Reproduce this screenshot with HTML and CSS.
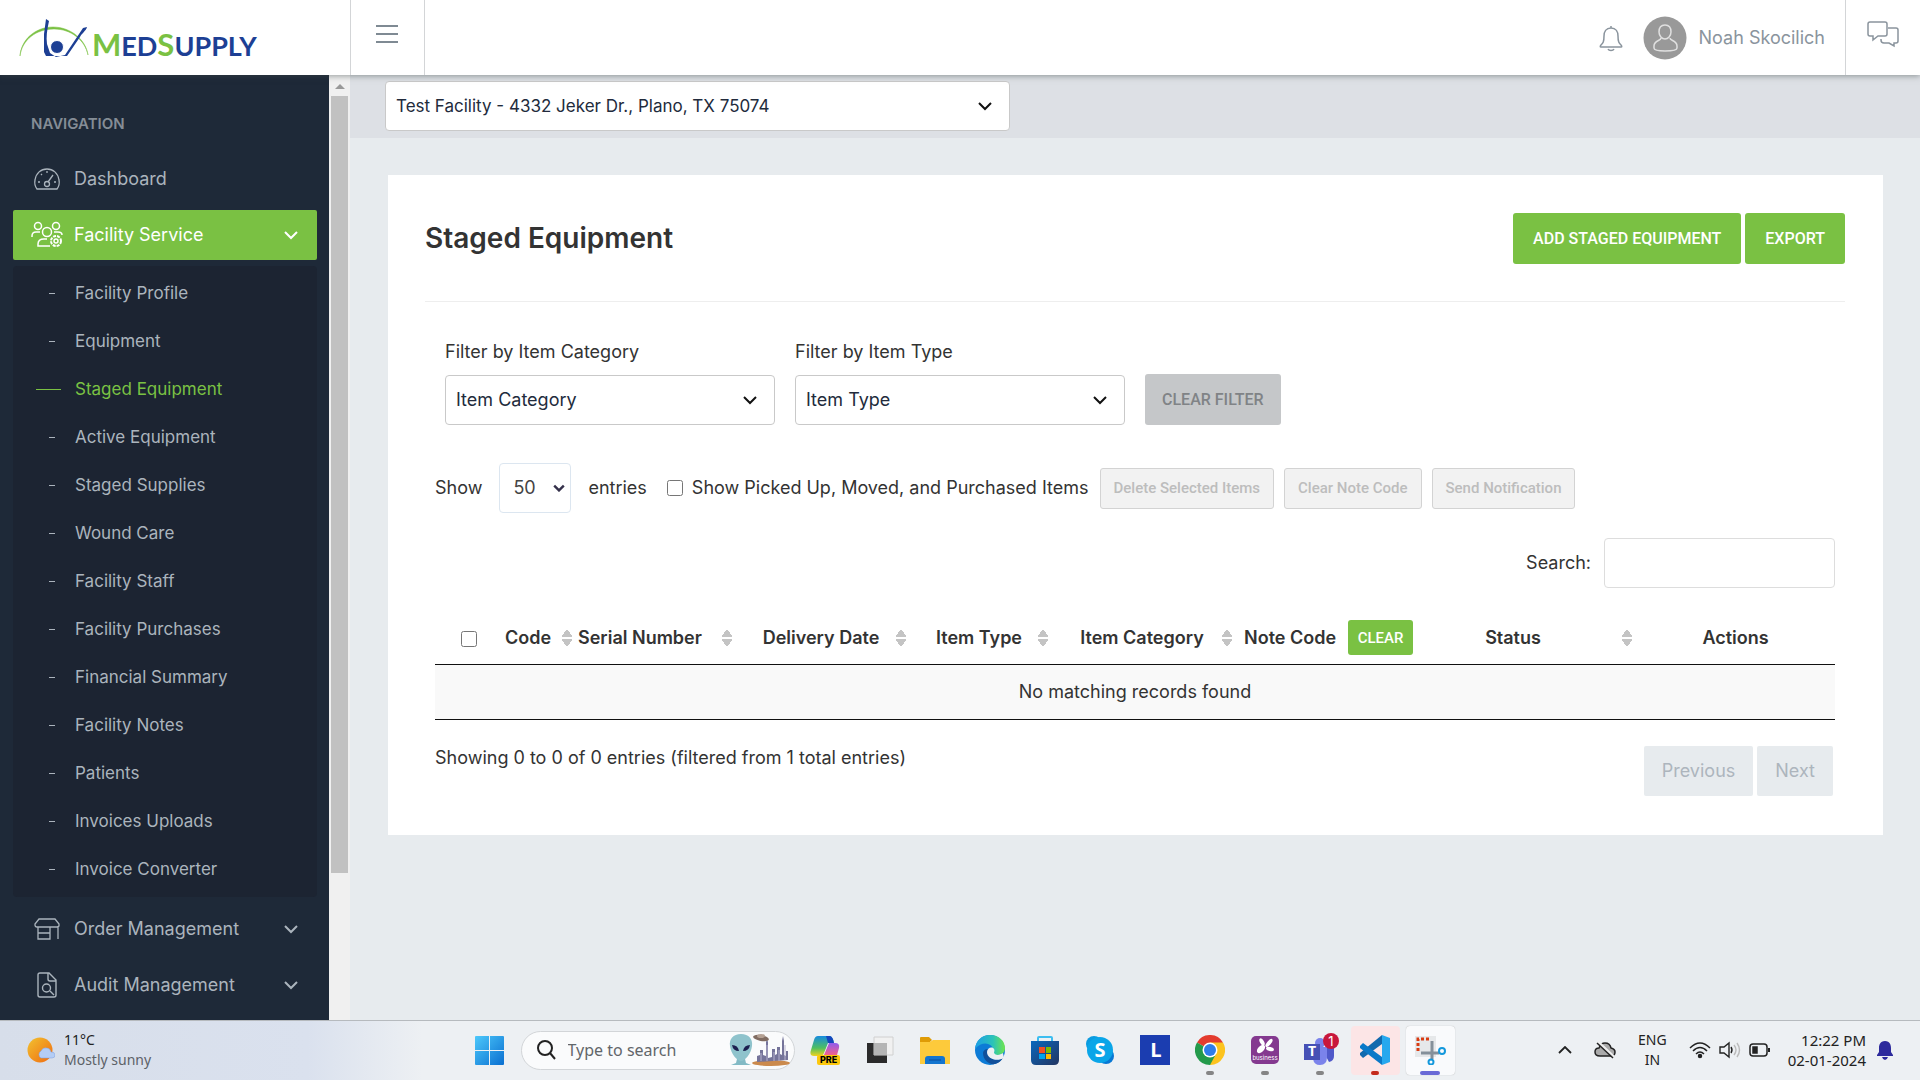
FILE: index.html
```html
<!DOCTYPE html>
<html lang="en">
<head>
<meta charset="utf-8">
<meta name="viewport" content="width=device-width, initial-scale=1">
<title>Staged Equipment - MedSupply</title>
<link rel="stylesheet" href="styles.css">
</head>
<body>
<header class="topbar">
  <a class="brand" href="#" aria-label="MedSupply">
    <svg width="250" height="50" viewBox="0 0 250 50">
      <path d="M1 42C2 26 16 13 34 13c18 0 33 13 35 28C66 26 52 15 35 15 17 15 3 26 1 42z" fill="#7ac143" stroke="#7ac143" stroke-width=".5"/>
      <path d="M27 5l3 2c-2 9-3 16-2 23l3 9 6 4 9-2 18-27 4-1c-1 4-5 6-7 10L48 42H27l-2-4V20z" fill="#1d3f94"/>
      <circle cx="38" cy="33" r="6.500" fill="#1d3f94" stroke="#fff"/>
      <text class="brand-text" x="73" y="42" fill="#1d3f94"><tspan class="brand-cap">M</tspan>ED<tspan class="brand-cap">S</tspan>UPPLY</text>
    </svg>
  </a>
  <button class="menu-toggle" aria-label="Toggle menu"><svg width="24" height="20" viewBox="0 0 24 20" stroke="#7f8a93" stroke-width="2"><path d="M1 2h22M1 10h22M1 18h22"/></svg></button>
  <div class="user">
    <button class="plain" aria-label="Alerts"><svg width="24" height="28" viewBox="0 0 24 28" fill="none" stroke="#8a949d" stroke-width="1.5"><path d="M12 2v2M12 4c-5 0-7 4-7 8 0 6-1 7-3 9-1 1-1 2 0 2h20c1 0 1-1 0-2-2-2-3-3-3-9 0-4-2-8-7-8zM9 25c1 2 5 2 6 0"/></svg></button>
    <a class="profile" href="#">
      <svg width="44" height="44" viewBox="0 0 44 44"><circle cx="22" cy="22" r="21.500" fill="#999"/><path d="M22 9c4 0 6 3 6 7s-3 7-6 7-6-3-6-7 2-7 6-7zM18 22c0 3-7 2-7 8v2c0 2 5 3 11 3s12-1 12-3v-2c0-6-7-5-7-8" fill="none" stroke="#e0e0e0" stroke-width="1.500"/></svg>
      <span>Noah Skocilich</span>
    </a>
  </div>
  <button class="chat" aria-label="Messages"><svg width="34" height="28" viewBox="0 0 34 28" fill="none" stroke="#8a949d" stroke-width="1.500"><path d="M4 2h15q2 0 2 2v10q0 2-2 2h-7l-5 4v-4H4q-2 0-2-2V4q0-2 2-2zM22 8h8q2 0 2 2v11q0 2-2 2h-2v3l-5-3h-5q-3 0-3-3v-1"/></svg></button>
</header>

<div class="app">
  <nav class="sidebar">
    <h2 class="nav-title">NAVIGATION</h2>
    <a class="nav-item" href="#">
      <svg width="28" height="28" viewBox="0 0 28 28" fill="none" stroke="currentColor" stroke-width="1.300"><path d="M4 24q-3-4-2-9C3 8 8 4 14 4s11 4 12 11q1 5-2 9zM14 6v2M8 9l1 1M5 17h2M21 17h2M20 10l-5 7"/><circle cx="14" cy="19" r="2.500"/></svg>
      <span>Dashboard</span>
    </a>
    <a class="nav-item current" href="#">
      <svg class="wide" width="32" height="28" viewBox="0 0 32 28" fill="none" stroke="currentColor" stroke-width="1.500"><circle cx="7" cy="5" r="3.500"/><circle cx="25" cy="5" r="3.500"/><circle cx="16" cy="11" r="4.500"/><path d="M1 16v-1q0-4 4-4h4M31 14q0-3-4-3h-4M19 25H7v-2q0-5 6-5h3"/><circle cx="25" cy="20" r="5" stroke-dasharray="3 1" stroke-width="2"/><circle cx="25" cy="20" r="2"/></svg>
      <span>Facility Service</span>
      <svg class="chev" width="14" height="10" viewBox="0 0 14 10"><path d="M1 2l6 6 6-6"/></svg>
    </a>
    <ul class="subnav">
      <li><a href="#">Facility Profile</a></li>
      <li><a href="#">Equipment</a></li>
      <li><a class="active" href="#">Staged Equipment</a></li>
      <li><a href="#">Active Equipment</a></li>
      <li><a href="#">Staged Supplies</a></li>
      <li><a href="#">Wound Care</a></li>
      <li><a href="#">Facility Staff</a></li>
      <li><a href="#">Facility Purchases</a></li>
      <li><a href="#">Financial Summary</a></li>
      <li><a href="#">Facility Notes</a></li>
      <li><a href="#">Patients</a></li>
      <li><a href="#">Invoices Uploads</a></li>
      <li><a href="#">Invoice Converter</a></li>
    </ul>
    <a class="nav-item" href="#">
      <svg width="28" height="28" viewBox="0 0 28 28" fill="none" stroke="currentColor" stroke-width="1.300"><path d="M6 4h16l4 5v2q-1 1-2 1H4q-2 0-2-2V9zM5 12v12h12V12M5 18h12M25 12v12"/></svg>
      <span>Order Management</span>
      <svg class="chev" width="14" height="10" viewBox="0 0 14 10"><path d="M1 2l6 6 6-6"/></svg>
    </a>
    <a class="nav-item" href="#">
      <svg width="28" height="28" viewBox="0 0 28 28" fill="none" stroke="currentColor" stroke-width="1.400"><path d="M7 2h9l7 7v15q0 2-2 2H7q-2 0-2-2V4q0-2 2-2zM15 2v6q0 2 2 2h6M17 20l4 4"/><circle cx="13.500" cy="17" r="4"/></svg>
      <span>Audit Management</span>
      <svg class="chev" width="14" height="10" viewBox="0 0 14 10"><path d="M1 2l6 6 6-6"/></svg>
    </a>
  </nav>
  <div class="scrollbar" aria-hidden="true"><i class="scroll-up"></i><i class="scroll-thumb"></i></div>

  <main class="main">
    <div class="facility-bar">
      <div class="select facility">
        <select aria-label="Facility"><option>Test Facility - 4332 Jeker Dr., Plano, TX 75074</option></select>
        <svg width="14" height="10" viewBox="0 0 14 10"><path d="M1 2l6 6 6-6"/></svg>
      </div>
    </div>
    <section class="card">
      <div class="card-head">
        <h1>Staged Equipment</h1>
        <div class="actions">
          <button class="btn green">ADD STAGED EQUIPMENT</button>
          <button class="btn green">EXPORT</button>
        </div>
      </div>
      <div class="filters">
        <div class="field">
          <label for="category">Filter by Item Category</label>
          <div class="select"><select id="category"><option>Item Category</option></select><svg width="14" height="10" viewBox="0 0 14 10"><path d="M1 2l6 6 6-6"/></svg></div>
        </div>
        <div class="field">
          <label for="type">Filter by Item Type</label>
          <div class="select"><select id="type"><option>Item Type</option></select><svg width="14" height="10" viewBox="0 0 14 10"><path d="M1 2l6 6 6-6"/></svg></div>
        </div>
        <button class="btn gray">CLEAR FILTER</button>
      </div>
      <div class="panel">
        <div class="tools">
          <label for="length">Show</label>
          <div class="select length"><select id="length"><option>50</option></select><svg width="12" height="8" viewBox="0 0 14 10"><path d="M1 2l6 6 6-6"/></svg></div>
          <label class="after" for="length">entries</label>
          <input type="checkbox" id="moved">
          <label class="moved" for="moved">Show Picked Up, Moved, and Purchased Items</label>
          <div class="bulk">
            <button disabled>Delete Selected Items</button>
            <button disabled>Clear Note Code</button>
            <button disabled>Send Notification</button>
          </div>
        </div>
        <div class="search"><label for="search">Search:</label><input id="search" type="search"></div>
        <table>
          <colgroup><col class="c-check"><col class="c-code"><col class="c-serial"><col class="c-date"><col class="c-type"><col class="c-cat"><col class="c-note"><col class="c-status"><col></colgroup>
          <thead>
            <tr>
              <th><input type="checkbox" aria-label="Select all"></th>
              <th class="sort start">Code</th>
              <th class="sort start">Serial Number</th>
              <th class="sort">Delivery Date</th>
              <th class="sort">Item Type</th>
              <th class="sort">Item Category</th>
              <th><div class="note">Note Code <button class="clear">CLEAR</button></div></th>
              <th class="sort">Status</th>
              <th>Actions</th>
            </tr>
          </thead>
          <tbody><tr><td colspan="9">No matching records found</td></tr></tbody>
        </table>
        <div class="table-foot">
          <p>Showing 0 to 0 of 0 entries (filtered from 1 total entries)</p>
          <div class="pager"><button disabled>Previous</button><button disabled>Next</button></div>
        </div>
      </div>
    </section>
  </main>
</div>

<footer class="taskbar">
  <div class="weather">
    <svg width="28" height="28" viewBox="0 0 28 28"><defs><linearGradient id="sun" x1="0" y1="0" x2="1" y2="1"><stop offset="0" stop-color="#f2c230"/><stop offset="1" stop-color="#f06a10"/></linearGradient></defs><circle cx="13" cy="14" r="12.500" fill="url(#sun)"/><path d="M14 22a4 4 0 0 1 0-7q2-4 6-3 3 0 4 4 4 0 4 3t-3 3z" fill="#b4cdf5" stroke="#7e9fe0" stroke-width=".5"/></svg>
    <p>11°C<br><span>Mostly sunny</span></p>
  </div>
  <div class="dock">
    <button aria-label="Start"><svg width="30" height="30" viewBox="0 0 30 30"><defs><linearGradient id="win" x1="0" y1="0" x2="1" y2="1"><stop offset="0" stop-color="#4cc8fb"/><stop offset="1" stop-color="#0a6fd0"/></linearGradient></defs><path d="M0 2q0-1 1-1h13v14H0zM15 1h13q1 0 1 1v13H15zM0 16h14v14H1q-1 0-1-1zM15 16h14v13q0 1-1 1H15z" fill="url(#win)"/></svg></button>
    <label class="os-search">
      <svg width="20" height="20" viewBox="0 0 20 20" fill="none" stroke="#222" stroke-width="2"><circle cx="9" cy="8" r="7"/><path d="M14 13l5 6"/></svg>
      <input type="text" placeholder="Type to search" aria-label="Type to search">
      <svg width="62" height="34" viewBox="0 0 62 34"><ellipse cx="42" cy="30" rx="19" ry="3" fill="#cb8a4d"/><path d="M28 29v-6l3-1v-5h3v5l3 1V9l1-3 1 3v16l4-1v-8h3v6l2-1v-7h3v7l2 1V8l1-5 1 5v14l2 1v-5h2v9z" fill="#75749a"/><path d="M32 28v-8M38 28V12M45 28v-9M50 28V17M56 27v-15" stroke="#b7b3cf"/><path d="M8 26h8l1 4 5 2H2l5-2z" fill="#82bac5"/><path d="M12 1c8 0 12 5 11 12-1 8-7 15-11 15S2 21 1 13C0 6 4 1 12 1z" fill="#8fc3cc"/><path d="M3 12q6 0 7 6-6 0-7-6zM21 12q-6 0-7 6 6 0 7-6z" fill="#1c2050"/><ellipse cx="32" cy="5" rx="8" ry="3" transform="rotate(10 32 5)" fill="#806c62"/><ellipse cx="32" cy="3" rx="4" ry="2" fill="#b4a194"/></svg>
    </label>
    <button aria-label="Copilot"><svg width="30" height="30" viewBox="0 0 30 30"><defs><linearGradient id="ca" x1="0" y1="0" x2="0" y2="1"><stop offset="0" stop-color="#168be0"/><stop offset=".6" stop-color="#4fbf60"/><stop offset="1" stop-color="#f0d31c"/></linearGradient><linearGradient id="cb" x1="0" y1="0" x2="0" y2="1"><stop offset="0" stop-color="#8e5bee"/><stop offset="1" stop-color="#f3618a"/></linearGradient></defs><path d="M8 1h12q3 1 4 7h-6l-4 10q-1 3-4 3H4q-5 0-3-6L4 5q1-4 4-4z" fill="url(#ca)"/><path d="M16 1h4q3 1 4 7h-6z" fill="#1446bc"/><path d="M19 8h6q5 0 4 5l-2 7H14z" fill="url(#cb)"/><rect x="7" y="20" width="23" height="10" rx="2" fill="#fdc80c"/><text class="tiny" x="10" y="28">PRE</text></svg></button>
    <button aria-label="Task view"><svg width="30" height="30" viewBox="0 0 30 30"><path d="M2 8h20v20H2z" fill="#2b2b2b"/><path d="M9 2h19v18H9z" fill="#f1f1f1" stroke="#d0d0d0"/><path d="M9 8h13v12H9z" fill="#b5b5b5"/></svg></button>
    <button aria-label="File Explorer"><svg width="30" height="30" viewBox="0 0 30 30"><path d="M0 3q0-1 1-1h8l3 3-3 3H0z" fill="#df9b06"/><path d="M0 7h10l3-2h17v24H0z" fill="#fdca3b"/><path d="M5 29v-5q0-3 3-3h14q3 0 3 3v5z" fill="#1375cf"/><path d="M9 25h12" stroke="#0b4c9b"/></svg></button>
    <button aria-label="Edge"><svg width="30" height="30" viewBox="0 0 30 30"><defs><linearGradient id="edge"><stop offset="0" stop-color="#1d9ee6"/><stop offset=".6" stop-color="#2bc3b8"/><stop offset="1" stop-color="#6fe54c"/></linearGradient></defs><circle cx="15" cy="15" r="15" fill="#0d7bd6"/><path d="M0 14C1 5 7 0 15 0c9 0 15 6 15 13 0 5-4 7-8 7-3 0-5-1-4-3 2-8-10-13-18-3z" fill="url(#edge)"/><path d="M8 18c0 7 6 12 12 11 4-1 6-3 8-6-7 4-17 1-15-9-3 0-5 2-5 4z" fill="#11509b"/><path d="M12 17c0-4 5-6 7-3 1 1 0 3 0 4 2 3 6 2 9 0l1 5c-7 4-17 1-17-6z" fill="#eef0f3"/></svg></button>
    <button aria-label="Microsoft Store"><svg width="30" height="30" viewBox="0 0 30 30"><defs><linearGradient id="store" x1="0" y1="0" x2="1" y2="1"><stop offset="0" stop-color="#0968be"/><stop offset="1" stop-color="#233561"/></linearGradient></defs><path d="M8 7V3q0-1 1-1h12q1 0 1 1v4" fill="none" stroke="#3cbdf0" stroke-width="2"/><path d="M1 6h28v19q0 5-5 5H6q-5 0-5-5z" fill="url(#store)"/><path d="M9 12h6v6H9z" fill="#f25022"/><path d="M16 12h5v6h-5z" fill="#7fba00"/><path d="M9 19h6v5H9z" fill="#00a4ef"/><path d="M16 19h5v5h-5z" fill="#ffb900"/></svg></button>
    <button aria-label="Skype"><svg width="30" height="30" viewBox="0 0 30 30"><circle cx="9" cy="9" r="8" fill="#0a9be0"/><circle cx="21" cy="21" r="8" fill="#0878d4"/><circle cx="15" cy="15" r="13" fill="#0aa5e8"/><text class="glyph" x="15" y="22">S</text></svg></button>
    <button aria-label="L"><svg width="30" height="30" viewBox="0 0 30 30"><path d="M0 0h30v30H0z" fill="#1b3db0"/><text class="glyph" x="16" y="22">L</text></svg></button>
    <button class="running" aria-label="Chrome"><svg width="30" height="30" viewBox="0 0 30 30"><path d="M15 15L2 7.500A15 15 0 0 1 28 7.500z" fill="#e33b2e"/><path d="M15 15V7.500h13A15 15 0 0 1 15 30z" fill="#fcc31e"/><path d="M15 15l6 4-6 11A15 15 0 0 1 2 7.500z" fill="#239a4b"/><circle cx="15" cy="15" r="7.500" fill="#fff"/><circle cx="15" cy="15" r="6" fill="#2f7de9"/></svg></button>
    <button class="running" aria-label="Splashtop Business"><svg width="30" height="30" viewBox="0 0 30 30"><rect x="1" y="1" width="28" height="28" rx="5" fill="#84398f"/><ellipse cx="12" cy="7" rx="2" ry="4" transform="rotate(-30 12 7)" fill="#fff"/><ellipse cx="19" cy="8" rx="2" ry="5" transform="rotate(40 19 8)" fill="#fff"/><ellipse cx="20" cy="14" rx="4" ry="2" transform="rotate(15 20 14)" fill="#fff"/><ellipse cx="11" cy="14" rx="5" ry="3" transform="rotate(-45 11 14)" fill="#fff"/><text class="micro" x="15" y="25">business</text></svg></button>
    <button class="running" aria-label="Teams"><svg width="40" height="36" viewBox="-1 -3 40 36"><circle cx="19" cy="8" r="5" fill="#7b83eb"/><path d="M20 12h13v9q0 5-5 6z" fill="#5059c9"/><path d="M12 12h14v10q0 8-7 8-6 0-7-6z" fill="#7b83eb"/><path d="M3 9h16v16H3z" fill="#4650b5"/><text class="team" x="11" y="21">T</text><circle cx="30" cy="6" r="8" fill="#c8173c"/><text class="count" x="30" y="11">1</text></svg></button>
    <button class="running alert" aria-label="Visual Studio Code"><svg width="30" height="30" viewBox="0 0 30 30"><path d="M22 0v9L3 23l-3-3v-2z" fill="#1169ae"/><path d="M0 11l3-3 19 14v8L0 13z" fill="#0a79c8"/><path d="M22 0l8 3v24l-8 3z" fill="#27a8ee"/></svg></button>
    <button class="running focused" aria-label="Snipping Tool"><svg width="32" height="30" viewBox="0 0 32 30"><path d="M1 1h21v21H1z" fill="#e6e8ea"/><path d="M4 16V4h13" fill="none" stroke="#d83b12" stroke-width="3" stroke-dasharray="3 2"/><path d="M18 6v18M7 18h18" stroke="#85909a" stroke-width="3"/><g fill="none" stroke="#1498dc" stroke-width="2"><circle cx="28" cy="16" r="3"/><circle cx="17" cy="27" r="2.500"/></g></svg></button>
  </div>
  <div class="tray">
    <svg width="14" height="8" viewBox="0 0 14 8" fill="none" stroke="#222" stroke-width="1.800"><path d="M1 7l6-6 6 6"/></svg>
    <svg width="22" height="18" viewBox="0 0 22 18" fill="#aaa" stroke="#222" stroke-width="1.500"><path d="M6 15q-5 0-5-4 0-4 4-4 2-5 6-5 5 0 6 5 4 1 4 4 0 4-4 4z"/><path d="M4 1l16 15" stroke="#eee" stroke-width="3"/><path d="M3 2l16 15"/></svg>
    <p class="lang">ENG<br>IN</p>
    <div class="status">
      <svg width="22" height="18" viewBox="0 0 22 18" fill="none" stroke="#222" stroke-width="1.500"><path d="M1 7q10-10 20 0M4 10q7-7 14 0M7 13q4-4 8 0"/><circle cx="11" cy="15" r="1.500" fill="#222"/></svg>
      <svg width="22" height="18" viewBox="0 0 22 18" fill="none" stroke="#222" stroke-width="1.400"><path d="M1 6h4l5-4v14l-5-4H1zM12 6q2 3 0 6"/><path d="M15 4q4 5 0 10M18 2q5 7 0 14" stroke="#bbb"/></svg>
      <svg width="22" height="16" viewBox="0 0 22 16" fill="none" stroke="#222" stroke-width="1.500"><rect x="1" y="2" width="17" height="12" rx="3"/><path d="M4 5h4v6H4z" fill="#222"/><path d="M20 6v4" stroke-width="2"/></svg>
    </div>
    <p class="clock">12:22 PM<br>02-01-2024</p>
    <svg width="18" height="20" viewBox="0 0 18 20" fill="#2d2a9c"><path d="M9 1c5 0 6 4 6 7v4l2 3v1H1v-1l2-3V8c0-3 1-7 6-7zM6 17h6q-1 3-3 3t-3-3z"/></svg>
  </div>
</footer>
</body>
</html>
```

FILE: styles.css
```css
* { box-sizing: border-box; }
body {
  margin: 0;
  height: 100vh;
  display: flex;
  flex-direction: column;
  overflow: hidden;
  background: #e7ebee;
  color: #333;
  font: 18px/24px Inter, "Open Sans", sans-serif;
}
button, input, select { font: inherit; color: inherit; margin: 0; }
button { padding: 0; border: 0; background: none; cursor: pointer; }
a { color: inherit; text-decoration: none; }
p, h1, h2 { margin: 0; }
svg { display: block; flex: none; }

/* Header */
.topbar {
  display: flex;
  flex: none;
  height: 75px;
  background: #fff;
  box-shadow: 0 1px 6px rgba(60, 70, 70, .5);
  z-index: 1;
}
.brand { width: 350px; padding: 14px 19px; }
.brand-text { font: 700 27px Lato, sans-serif; }
.brand-cap { font-size: 31px; fill: #7ac143; }
.menu-toggle { width: 75px; padding: 0 0 7px 24px; border: solid #d3d5d7; border-width: 0 1px; }
.user { display: flex; align-items: center; gap: 20px; margin-left: auto; padding-right: 20px; }
.profile { display: flex; align-items: center; gap: 12px; color: #8a949d; }
.chat { width: 75px; padding: 0 0 7px 20px; border-left: 1px solid #d3d5d7; }

/* Sidebar */
.app { display: flex; flex: 1; min-height: 0; }
.sidebar { width: 329px; flex: none; overflow: hidden; padding: 0 12px 0 13px; background: #1e2938; color: #abb4bd; }
.nav-title { padding: 37px 18px 18px; color: #858d96; font-size: 15px; font-weight: 600; line-height: 24px; }
.nav-item { display: flex; align-items: center; height: 50px; margin-bottom: 6px; padding: 0 19px 0 20px; border-radius: 2px; }
.nav-item span { flex: 1; padding-left: 13px; }
.nav-item .wide { margin: 0 -2px; }
.current { background: #7ac143; color: #fff; }
.chev { fill: none; stroke: currentColor; stroke-width: 2; }
.subnav { list-style: none; margin: 0 0 7px; padding: 3px 0 4px; border-radius: 4px; background: #1c2432; }
.subnav a { display: flex; align-items: center; height: 48px; padding-left: 36px; font-size: 17px; }
.subnav a::before { content: ""; width: 6px; height: 1px; margin-right: 20px; background: currentColor; }
.subnav .active { padding-left: 23px; color: #7ac143; }
.subnav .active::before { width: 25px; margin-right: 14px; }
.scrollbar { display: flex; flex-direction: column; align-items: center; flex: none; width: 21px; padding-top: 9px; background: #f0f0f0; }
.scroll-up { border: 5px solid transparent; border-top: 0; border-bottom-color: #999; }
.scroll-thumb { width: 17px; height: 83%; margin-top: 7px; background: #c1c1c1; }

/* Content */
.main { flex: 1; min-width: 0; }
.facility-bar { padding: 6px 35px 7px; background: #dde0e5; }
.select { display: grid; grid-template-columns: 1fr 32px; align-items: center; }
.select select { grid-area: 1 / 1 / 2 / 3; width: 100%; height: 50px; padding: 0 10px; appearance: none; border: 1px solid #c9c9c9; border-radius: 4px; background: #fff; color: #222b3c; }
.select svg { grid-area: 1 / 2; pointer-events: none; fill: none; stroke: #111; stroke-width: 2; }
.facility { max-width: 625px; }
.facility select { font-size: 17px; }
.card { margin: 37px 37px 0 38px; padding: 38px 38px 39px 37px; background: #fff; }
.card-head { display: flex; justify-content: space-between; align-items: flex-start; padding-bottom: 37px; border-bottom: 1px solid #eee; }
h1 { font-size: 28px; font-weight: 600; line-height: 50px; }
.actions { display: flex; gap: 4px; }
.btn { height: 51px; padding: 0 20px; border-radius: 3px; font: 500 16px Roboto, sans-serif; }
.green { background: #7ac143; color: #fff; }
.gray { padding: 0 17px; background: #c5c7c9; color: #808386; }
.filters { display: flex; align-items: flex-end; gap: 20px; margin: 38px 20px 0; }
.field { display: flex; flex-direction: column; gap: 11px; flex: 0 1 330px; }
.panel { margin: 38px 10px 0; }
.tools { display: flex; align-items: center; }
.length { width: 72px; margin: 0 17px; grid-template-columns: 1fr 18px; }
.length select { padding: 0 13px; border-color: #dce6f0; color: #444; }
.length svg { stroke-width: 3; stroke: #34304a; }
input[type="checkbox"] { width: 16px; height: 16px; }
.tools .after { margin-right: 20px; }
.moved { padding: 0 11px 0 9px; }
.bulk { display: flex; gap: 10px; }
.bulk button { height: 41px; padding: 0 13px; border: 1px solid #d3d3d3; border-radius: 3px; background: #f2f2f2; color: #bdbdbd; font: 500 15px Roboto, sans-serif; }
.search { display: flex; justify-content: flex-end; align-items: center; gap: 13px; margin-top: 25px; }
.search input { width: 231px; height: 50px; border: 1px solid #ddd; border-radius: 4px; background: #fff; }
table { width: 100%; margin-top: 24px; table-layout: fixed; border-collapse: collapse; }
.c-check { width: 68px; }
.c-code { width: 73px; }
.c-serial { width: 160px; }
.c-date { width: 174px; }
.c-type { width: 142px; }
.c-cat { width: 184px; }
.c-note { width: 158px; }
.c-status { width: 242px; }
th { height: 52px; padding: 0; font-weight: 600; vertical-align: middle; white-space: nowrap; }
th input { vertical-align: middle; }
thead tr { border-bottom: 1px solid #111; }
.sort {
  padding-right: 4px;
  background:
    conic-gradient(from 143deg at 50% 0, #c4c4c4 74deg, transparent 0) right 4px top 17px / 10px 8px no-repeat,
    conic-gradient(from -37deg at 50% 100%, #c4c4c4 74deg, transparent 0) right 4px top 27px / 10px 8px no-repeat;
}
.start { padding: 0 0 0 2px; text-align: left; }
.note { display: flex; align-items: center; gap: 12px; padding-left: 8px; }
.clear { flex: none; width: 65px; height: 35px; border-radius: 3px; background: #7ac143; color: #fff; font: 500 15px Roboto, sans-serif; }
td { height: 55px; padding: 0; text-align: center; background: #f9f9f9; border-bottom: 1px solid #111; }
.table-foot { display: flex; justify-content: space-between; align-items: flex-start; margin-top: 26px; }
.pager { display: flex; gap: 4px; padding-right: 2px; }
.pager button { height: 50px; padding: 0 18px; border-radius: 2px; background: #e7ebee; color: #adb5bd; }

/* Taskbar */
.taskbar {
  display: grid;
  grid-template-columns: 1fr auto 1fr;
  align-items: center;
  flex: none;
  height: 60px;
  padding-bottom: 1px;
  border-top: 1px solid #b6babe;
  background: linear-gradient(90deg, #d7deea 0, #dae1ee 16%, #edf0f3 22%, #edf0f3);
  color: #222;
  font: 14px/20px "Noto Sans", "Open Sans", sans-serif;
}
.weather { display: flex; align-items: center; gap: 9px; padding-left: 27px; }
.weather span { color: #5d6268; }
.dock { display: flex; align-items: center; gap: 6px; }
.dock button { position: relative; display: grid; place-items: center; width: 49px; height: 49px; border-radius: 4px; }
.running::after { content: ""; position: absolute; bottom: 0; width: 8px; height: 4px; border-radius: 2px; background: #858585; }
.alert { background: #fce5e6; }
.alert::after { background: #c42b1c; }
.focused { background: #f9fafc; box-shadow: 0 0 1px #aaa; }
.focused::after { width: 20px; background: #6a6ad6; }
.os-search { display: flex; align-items: center; gap: 12px; width: 274px; height: 39px; padding: 0 3px 0 14px; border: 1px solid #d2d5d8; border-radius: 20px; background: #fafbfc; }
.os-search input { flex: 1; min-width: 0; padding: 0; border: 0; outline: 0; background: none; font-size: 16px; }
.os-search input::placeholder { color: #62666a; }
.tray { display: flex; justify-content: flex-end; align-items: center; gap: 22px; padding-right: 26px; }
.lang { text-align: center; }
.status { display: flex; align-items: center; gap: 8px; }
.clock { text-align: right; font-size: 15px; }
.tray .status + .clock { margin-left: -5px; }
.tray .clock + svg { margin-left: -12px; }
.tiny { font: 800 9px Inter, sans-serif; }
.glyph { font: 700 20px "Open Sans", sans-serif; fill: #fff; text-anchor: middle; }
.team { font: 700 14px "Open Sans", sans-serif; fill: #fff; text-anchor: middle; }
.count { font: 13px Inter, sans-serif; fill: #fff; text-anchor: middle; }
.micro { font: 6px Inter, sans-serif; fill: #fff; text-anchor: middle; }
```
